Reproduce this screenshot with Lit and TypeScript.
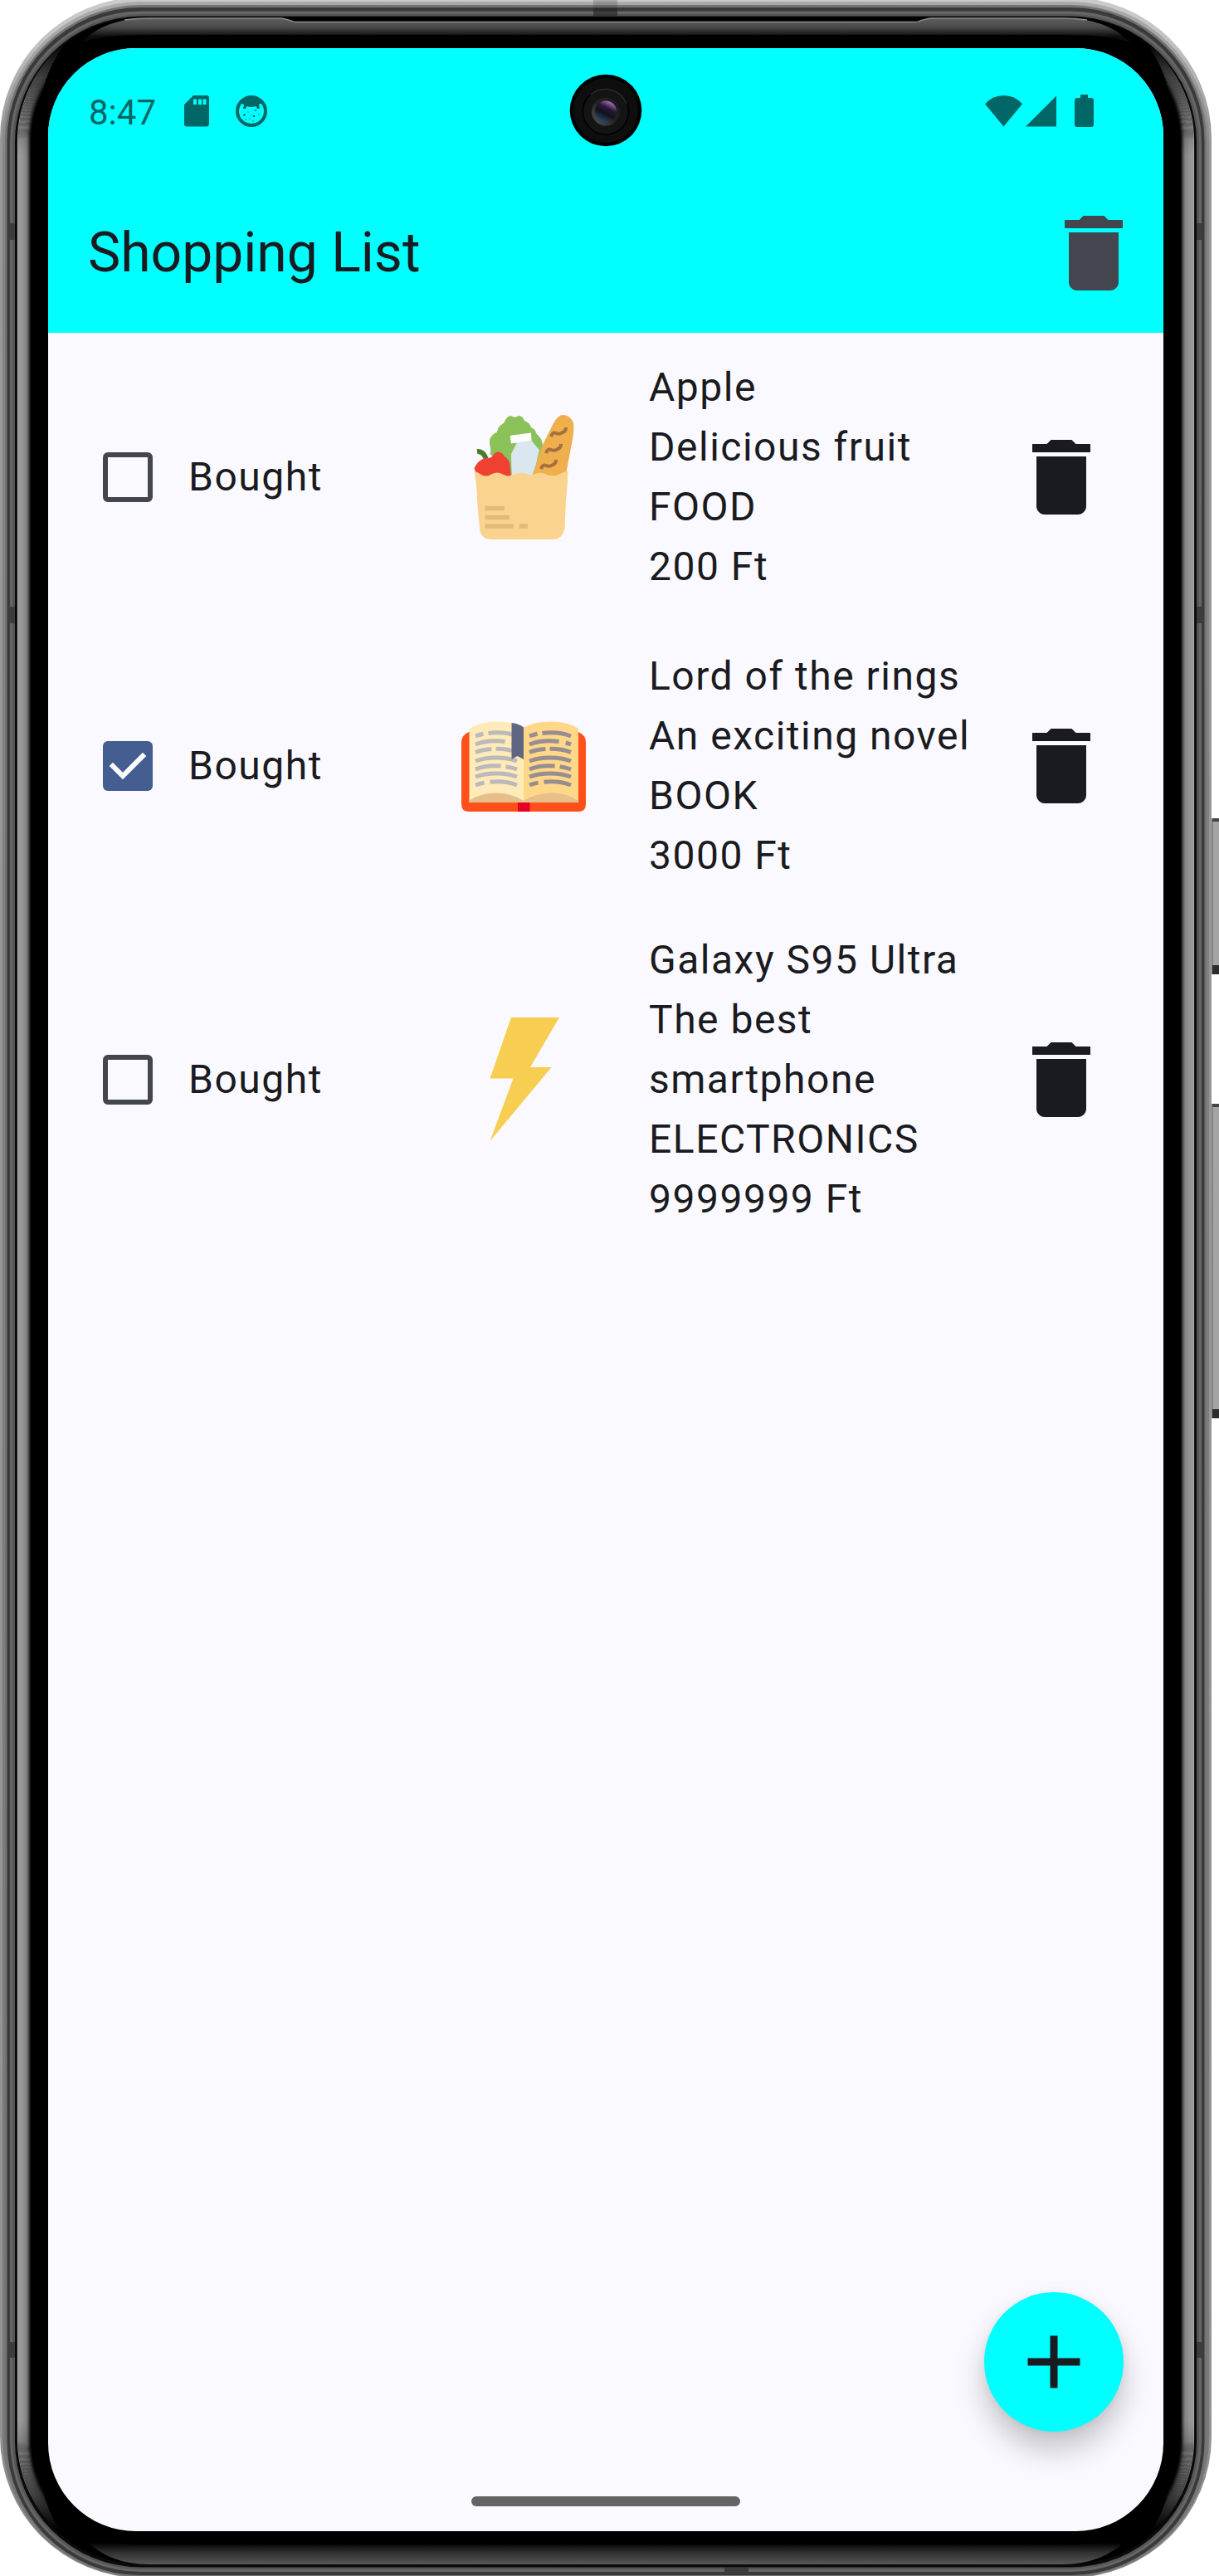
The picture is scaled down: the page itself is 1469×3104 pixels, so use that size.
import { LitElement, html, css, svg, nothing } from "lit";
import { customElement, property, state } from "lit/decorators.js";

type Category = "FOOD" | "BOOK" | "ELECTRONICS";

interface Item {
  name: string;
  description: string;
  category: Category;
  price: number;
  bought: boolean;
}

const trash = html`<svg class="trash" viewBox="0 0 24 24" width="120" height="120" fill="currentColor">
  <path d="M6 19c0 1.1.9 2 2 2h8c1.1 0 2-.9 2-2V7H6v12zM19 4h-3.5l-1-1h-5l-1 1H5v2h14V4z" />
</svg>`;

const baguetteMark = (x: number, y: number) => svg`
  <path d="M${x} ${y + 7} q2 -6 6 -4 q4 2 8 -1 q4 -1 4 -6" fill="none" stroke="#a3703f" stroke-width="4" />`;

const foodPicture = html`<svg viewBox="0 0 150 150" width="150" height="150" overflow="visible">
  <path fill="#8ac158" d="M62 75 L34.5 47 Q36 42 34.5 37 Q33 29 36 26 Q40 21 43 21 Q44 14 48 12 Q52 10 53 6 Q56 1 60 1 Q64 4 69 1 Q74 1 76 7 Q82 9 84 15 Q90 18 90 22 Q93 25 96 29 Q98 33 98 40 L88 75 Z" />
  <path fill="#dae7ee" d="M67 33 L84 30 Q90 38 94 42 L86 77 H61 Q60 62 60 47 Z" />
  <path fill="#fff" d="M58.8 26.5 Q58.6 24.5 61 24.5 L84 21.5 L84.5 30.5 L60 34.5 Z" />
  <path fill="#eeaf4c" d="M84 77 L98 36 L108 16 Q114 2 121 0 Q130 -1 135 9 Q136 20 134 29 L125 77 Z" />
  ${baguetteMark(108, 19)}${baguetteMark(102, 39)}${baguetteMark(96, 58)}
  <path d="M19 44 Q26 43 30 53" fill="none" stroke="#4b7a2b" stroke-width="6" />
  <path fill="#ef4132" d="M15.5 64 Q20 55 28 52 Q35 53 38 49 Q41 44 45 44.5 Q49 45 52 50 Q59 54 59 64 L60 77 H30 Q17 73 15.5 64 Z" />
  <path fill="#fad48f" d="M15.5 68 Q20 69 24 72 Q30 75 35 72 Q43 67 51 72 Q57 75 62 72 Q72 68 79 71 Q84 74 89 71 Q96 68 103 72 Q112 75 119 71 Q124 68 128.5 68 Q128 86 126 103 L124.5 137 Q122 149 112 150 H35 Q23 149 22 137 L19 103 Q19 86 15.5 68 Z" />
  <path d="M28.5 112.5 H52 M28.5 123.5 H58 M28.5 134 H63 M69.5 134 H80" stroke="#e1bb7c" stroke-width="5.5" />
</svg>`;

const lineRows = [35, 45, 54.5, 65, 75, 84, 94];
const lineBreaks: Array<[number, number] | null> = [[10, 16], [36, 44], [20, 25], null, [31, 37], null, [11, 18]];

const pageText = (x: number, color: string) =>
  lineRows.map((y, i) => {
    const gap = lineBreaks[i];
    const dash = gap ? `${gap[0]} ${gap[1] - gap[0]} 60` : "none";
    return svg`<path d="M${x} ${y + 4} C${x + 14} ${y - 1.5} ${x + 36} ${y - 1.5} ${x + 50} ${y + 4}" fill="none" stroke="${color}" stroke-width="5" stroke-dasharray="${dash}" />`;
  });

const bookPicture = html`<svg viewBox="0 0 150 150" width="150" height="150" overflow="visible">
  <path fill="#ff501a" d="M9 34 H141 Q150 38 150 46 V121 Q150 130 141 130 H9 Q0 130 0 121 V46 Q0 38 9 34 Z" />
  <path fill="#e50024" d="M68 119 H82.500 V130 H68 Z" />
  <path fill="#feebb7" d="M9.500 30 Q22 21.500 42 21.500 Q64 21.500 75 28.500 V119 H9.500 Z" />
  <path fill="#fed788" d="M75 28.500 Q88 21.500 108 21.500 Q130 21.500 141 30 V119 H75 Z" />
  <path fill="#e6bf8b" d="M9.500 119 V117 Q22 107.500 42 107.500 Q60 107.500 75 117 Q90 107.500 108 107.500 Q128 107.500 141 117 V119 Z" />
  ${pageText(17, "#bbb9bc")}${pageText(82, "#988e92")}
  <path fill="#5f6682" d="M60.500 23 Q70 24 75 28.500 V67 L67.500 63 L60.500 67 Z" />
</svg>`;

const boltPicture = html`<svg viewBox="0 0 150 150" width="150" height="150">
  <path fill="#f7ce52" d="M60 0 H118 L83 60 H108.500 L34.500 149 L62.500 73.500 H34.500 Z" />
</svg>`;

const pictures = { FOOD: foodPicture, BOOK: bookPicture, ELECTRONICS: boltPicture };

@customElement("shopping-row")
class ShoppingRow extends LitElement {
  @property({ attribute: false }) item!: Item;

  static styles = css`
    :host {
      display: block;
    }
    .row {
      box-sizing: border-box;
      display: grid;
      grid-template-columns: 144px 255px 300px 1fr 120px;
      align-items: center;
      padding: 24px 63px 24px 24px;
      min-height: 348px;
      font-size: 48px;
      line-height: 72px;
      letter-spacing: 1.5px;
      color: #1a1b20;
    }
    .check {
      justify-self: center;
      display: block;
    }
    .picture {
      display: flex;
      justify-content: center;
    }
    .label {
      padding-left: 1px;
    }
    .details {
      padding-left: 1px;
      width: 400px;
    }
    .trash {
      display: block;
    }
  `;

  render() {
    const { name, description, category, price, bought } = this.item;
    return html`<div class="row">
      <svg class="check" width="60" height="60" viewBox="0 0 60 60">
        ${bought
          ? svg`<rect width="60" height="60" rx="6" fill="#445e91" />
              <path d="M12 30 L24 42 L48 18" fill="none" stroke="#fff" stroke-width="6" stroke-linecap="square" />`
          : svg`<rect x="3" y="3" width="54" height="54" rx="3" fill="none" stroke="#44464f" stroke-width="6" />`}
      </svg>
      <div class="label">Bought</div>
      <div class="picture">${pictures[category]}</div>
      <div class="details">
        <div>${name}</div>
        <div>${description}</div>
        <div>${category}</div>
        <div>${price} Ft</div>
      </div>
      ${trash}
    </div>`;
  }
}

@customElement("status-bar")
class StatusBar extends LitElement {
  static styles = css`
    :host {
      display: block;
    }
    .bar {
      box-sizing: border-box;
      height: 151px;
      padding: 0 84px 0 49px;
      display: flex;
      align-items: center;
      color: #006666;
      font-size: 42px;
    }
    .time {
      width: 115px;
      padding-top: 3px;
    }
    .face {
      margin-left: 32px;
    }
    .wifi {
      margin-left: auto;
    }
    .signal {
      margin: 0 22px 0 4px;
    }
  `;

  render() {
    return html`<div class="bar">
      <div class="time">8:47</div>
      <svg width="30" height="38" viewBox="0 0 30 38" fill="currentColor">
        <path fill-rule="evenodd" d="M11 0 H27 Q30 0 30 3 V34 Q30 37.500 27 37.500 H3 Q0 37.500 0 34 V11 Z M11 4.500 V11 H15 V4.500 Z M17 4.500 V11 H21 V4.500 Z M22.500 4.500 V11 H26.500 V4.500 Z" />
      </svg>
      <svg class="face" width="38" height="38" viewBox="0 0 38 38" fill="currentColor">
        <circle cx="19" cy="19" r="17" fill="none" stroke="currentColor" stroke-width="4" />
        <path d="M6 9 Q19 -5 32 9 L28 11 L29 16 L26 16 L24.500 13 Q19 15 13.500 13 L12 16 L9 16 L10 11 Z" />
        <circle cx="10.500" cy="23.500" r="1.300" /><circle cx="22" cy="25" r="1.300" /><circle cx="24" cy="18" r="1" />
        <circle cx="15" cy="20" r=".7" /><circle cx="28" cy="23" r=".7" /><circle cx="17" cy="28" r=".7" />
        <circle cx="12" cy="29" r=".7" /><circle cx="21" cy="31" r=".7" /><circle cx="18" cy="24" r=".7" />
      </svg>
      <svg class="wifi" width="45" height="38" viewBox="0 0 45 38" fill="currentColor">
        <path d="M0 10.300 Q9 0 22.500 0 Q36 0 45 10.300 L22.500 37.500 Z" />
      </svg>
      <svg class="signal" width="37" height="38" viewBox="0 0 37 38" fill="currentColor"><path d="M37 0.500 V37.500 H0 Z" /></svg>
      <svg width="23" height="39" viewBox="0 0 23 39" fill="currentColor">
        <path d="M7 0 H16 V4 H20 Q23 4 23 7 V36 Q23 39 20 39 H3 Q0 39 0 36 V7 Q0 4 3 4 H7 Z" />
      </svg>
    </div>`;
  }
}

/* Metal body, glass edge and side buttons of the handset. */
@customElement("device-frame")
class DeviceFrame extends LitElement {
  static styles = css`
    :host {
      display: block;
    }
    svg {
      display: block;
    }
  `;

  private ring(x: number, y: number, bottom: number, radius: number, fill: string) {
    return svg`<rect x="${x}" y="${y}" width="${1460 - 2 * x}" height="${bottom - y}" rx="${radius}" fill="${fill}" />`;
  }

  /* Concentric strokes that get darker and shorter towards the screen. */
  private sideGlow() {
    const shades = [176, 150, 154, 153, 151, 149, 147, 144, 140, 136, 132, 122, 104, 80, 52, 24];
    return svg`<g mask="url(#fade)">${shades.map((shade, i) => {
      const radius = 149 - i;
      const angle = ((52 - i * 1.6) * Math.PI) / 180;
      const x = (170.5 - radius * Math.cos(angle)).toFixed(1);
      const dy = radius * Math.sin(angle);
      const left = 21.5 + i;
      return svg`<path d="M${x} ${(170 - dy).toFixed(1)} A${radius} ${radius} 0 0 0 ${left} 170 V2940 A${radius} ${radius} 0 0 0 ${x} ${(2940 + dy).toFixed(1)}"
        fill="none" stroke="rgb(${shade},${shade},${shade})" stroke-width="1.200" />`;
    })}</g>`;
  }

  private sideButton(y: number, height: number) {
    return svg`<rect x="1460" y="${y}" width="9" height="${height}" fill="#a4a4a4" />
      <rect x="1460" y="${y}" width="2" height="${height}" fill="#858585" />
      <rect x="1461" y="${y}" width="8" height="4" fill="#444" />
      <rect x="1461" y="${y + height - 11}" width="8" height="11" fill="#2c2c2c" />`;
  }

  render() {
    return html`<svg width="1469" height="3104" viewBox="0 0 1469 3104">
      <defs>
        <linearGradient id="edge" gradientUnits="userSpaceOnUse" x1="0" y1="0" x2="0" y2="3104">
          <stop offset="0" stop-color="#cbcbcb" /><stop offset=".015" stop-color="#c4c4c4" />
          <stop offset=".05" stop-color="#999" /><stop offset=".95" stop-color="#939393" /><stop offset="1" stop-color="#858585" />
        </linearGradient>
        <linearGradient id="edge-mid" gradientUnits="userSpaceOnUse" x1="0" y1="0" x2="0" y2="3104">
          <stop offset="0" stop-color="#aaa" /><stop offset=".02" stop-color="#a4a4a4" />
          <stop offset=".06" stop-color="#848484" /><stop offset="1" stop-color="#777" />
        </linearGradient>
        <linearGradient id="fade-ramp" gradientUnits="userSpaceOnUse" x1="0" y1="0" x2="0" y2="3104">
          <stop offset=".017" stop-color="#000" /><stop offset=".03" stop-color="#777" /><stop offset=".06" stop-color="#fff" />
          <stop offset=".94" stop-color="#fff" /><stop offset=".968" stop-color="#777" /><stop offset=".982" stop-color="#000" />
        </linearGradient>
        <mask id="fade" maskUnits="userSpaceOnUse" x="0" y="0" width="1469" height="3104">
          <rect width="1469" height="3104" fill="url(#fade-ramp)" />
        </mask>
        <linearGradient id="top" gradientUnits="userSpaceOnUse" x1="0" y1="22" x2="0" y2="44">
          <stop offset="0" stop-color="#606060" /><stop offset=".5" stop-color="#484848" /><stop offset="1" stop-color="#0c0c0c" />
        </linearGradient>
        <linearGradient id="bottom" gradientUnits="userSpaceOnUse" x1="0" y1="3064" x2="0" y2="3090">
          <stop offset="0" stop-color="#000" /><stop offset=".45" stop-color="#303030" /><stop offset="1" stop-color="#585858" />
        </linearGradient>
      </defs>
      ${this.ring(0, -3, 3106, 170, "url(#edge)")}
      ${this.ring(3, 2, 3105, 167, "url(#edge-mid)")}
      ${this.ring(6, 6, 3104, 164, "#747474")}
      ${this.ring(8.5, 9, 3103, 161, "#3a3a3a")}
      ${this.ring(12, 13.5, 3099, 158, "#666")}
      ${this.ring(15, 17, 3096, 155, "#555")}
      ${this.ring(18, 19.5, 3093.5, 152, "#0a0a0a")}
      ${this.ring(20.5, 21, 3090, 150, "#000")}
      ${this.sideGlow()}
      <g transform="translate(1460 0) scale(-1 1)">${this.sideGlow()}</g>
      <path fill="url(#top)" d="M98 51 Q126 22 178 22 H338 Q345 22.500 355 26.500 H1105 Q1115 22.500 1122 22 H1282 Q1334 22 1362 51 Q1335 42 1285 42 H175 Q125 42 98 51 Z" />
      <path d="M150 24 Q164 22 178 22 H338 Q345 22.500 355 26.500 H1105 Q1115 22.500 1122 22 H1282 Q1296 22 1310 24" fill="none" stroke="#8c8c8c" stroke-width="1.300" />
      <path fill="url(#bottom)" d="M100 3058 Q130 3090 180 3090 H1280 Q1330 3090 1360 3058 Q1335 3066 1285 3066 H175 Q125 3066 100 3058 Z" />
      ${[
        [10, 269, 8, 20],
        [10, 731, 8, 20],
        [10, 2822, 8, 19],
        [1442, 269, 8, 20],
        [1442, 731, 8, 20],
        [1442, 2822, 8, 19],
        [873, 3094, 29, 7],
      ].map(([x, y, w, h]) => svg`<rect x="${x}" y="${y}" width="${w}" height="${h}" fill="#3c3c3c" />`)}
      <rect x="715" y="0" width="29" height="10" fill="#333" opacity=".22" />
      <rect x="715" y="10" width="29" height="9" fill="#222" opacity=".6" />
      ${this.sideButton(986, 188)}${this.sideButton(1330, 379)}
    </svg>`;
  }
}

@customElement("app-root")
class AppRoot extends LitElement {
  @state() private items: Item[] = [
    { name: "Apple", description: "Delicious fruit", category: "FOOD", price: 200, bought: false },
    { name: "Lord of the rings", description: "An exciting novel", category: "BOOK", price: 3000, bought: true },
    { name: "Galaxy S95 Ultra", description: "The best smartphone", category: "ELECTRONICS", price: 9999999, bought: false },
  ];

  static styles = css`
    :host {
      display: block;
      width: 1469px;
      height: 3104px;
      background: #fff;
      font-family: Roboto, "Liberation Sans", sans-serif;
    }
    .stage {
      display: grid;
      width: 1469px;
      height: 3104px;
      overflow: hidden;
    }
    .frame,
    .screen {
      grid-area: 1 / 1;
    }
    .screen {
      position: relative;
      margin: 58px 67px 54px 58px;
      display: flex;
      flex-direction: column;
      border-radius: 106px;
      overflow: hidden;
      background: #faf9ff;
    }
    .header {
      background: #00ffff;
    }
    .title-bar {
      box-sizing: border-box;
      height: 192px;
      padding: 0 24px 0 48px;
      display: flex;
      align-items: center;
      justify-content: space-between;
      color: #44464f;
    }
    .title {
      margin: 0;
      font-size: 66px;
      line-height: 84px;
      font-weight: 400;
      color: #1a1b20;
    }
    .list {
      flex: 1;
    }
    .trash {
      display: block;
    }
    .camera {
      position: absolute;
      left: 628px;
      top: 31px;
    }
    .fab {
      position: absolute;
      right: 48px;
      bottom: 120px;
      width: 168px;
      height: 168px;
      padding: 0;
      border: 0;
      border-radius: 50%;
      background: #00ffff;
      color: #1a1b20;
      display: flex;
      align-items: center;
      justify-content: center;
      box-shadow: 0 22px 36px rgba(0, 0, 0, 0.22), 0 2px 12px rgba(0, 0, 0, 0.06);
    }
    .home {
      align-self: center;
      margin-bottom: 30px;
      width: 324px;
      height: 12px;
      border-radius: 6px;
      background: #646464;
    }
  `;

  render() {
    return html`<div class="stage">
      <device-frame class="frame"></device-frame>
      <div class="screen">
        <div class="header">
          <status-bar></status-bar>
          <div class="title-bar">
            <h1 class="title">Shopping List</h1>
            ${trash}
          </div>
        </div>
        <div class="list">${this.items.length ? this.items.map((item) => html`<shopping-row .item=${item}></shopping-row>`) : nothing}</div>
        <div class="home"></div>
        <svg class="camera" width="88" height="88" viewBox="-44 -44 88 88">
          <defs>
            <linearGradient id="lens" x1=".8" y1="0" x2=".3" y2="1">
              <stop offset="0" stop-color="#c98be0" /><stop offset=".35" stop-color="#2b1838" />
              <stop offset=".6" stop-color="#15101c" /><stop offset="1" stop-color="#28536a" />
            </linearGradient>
            <linearGradient id="rim" x1="1" y1="0" x2="0" y2="1">
              <stop offset="0" stop-color="#1a1a1a" /><stop offset=".5" stop-color="#222" /><stop offset="1" stop-color="#5a5a5a" />
            </linearGradient>
          </defs>
          <circle r="43.300" fill="#000" />
          <circle r="39" fill="#0e0e0e" />
          <circle cy="1.500" r="27.500" fill="#141414" stroke="#000" stroke-width="1.500" />
          <path d="M-18 -19 A27 27 0 0 1 25 -8" fill="none" stroke="#2c2c2c" stroke-width="1.500" />
          <circle cy="1.500" r="17" fill="url(#rim)" />
          <circle cy="1.500" r="13" fill="url(#lens)" />
        </svg>
        <button class="fab" aria-label="Add item">
          <svg width="108" height="108" viewBox="0 0 24 24" fill="currentColor"><path d="M19 13h-6v6h-2v-6H5v-2h6V5h2v6h6v2z" /></svg>
        </button>
      </div>
    </div>`;
  }
}
